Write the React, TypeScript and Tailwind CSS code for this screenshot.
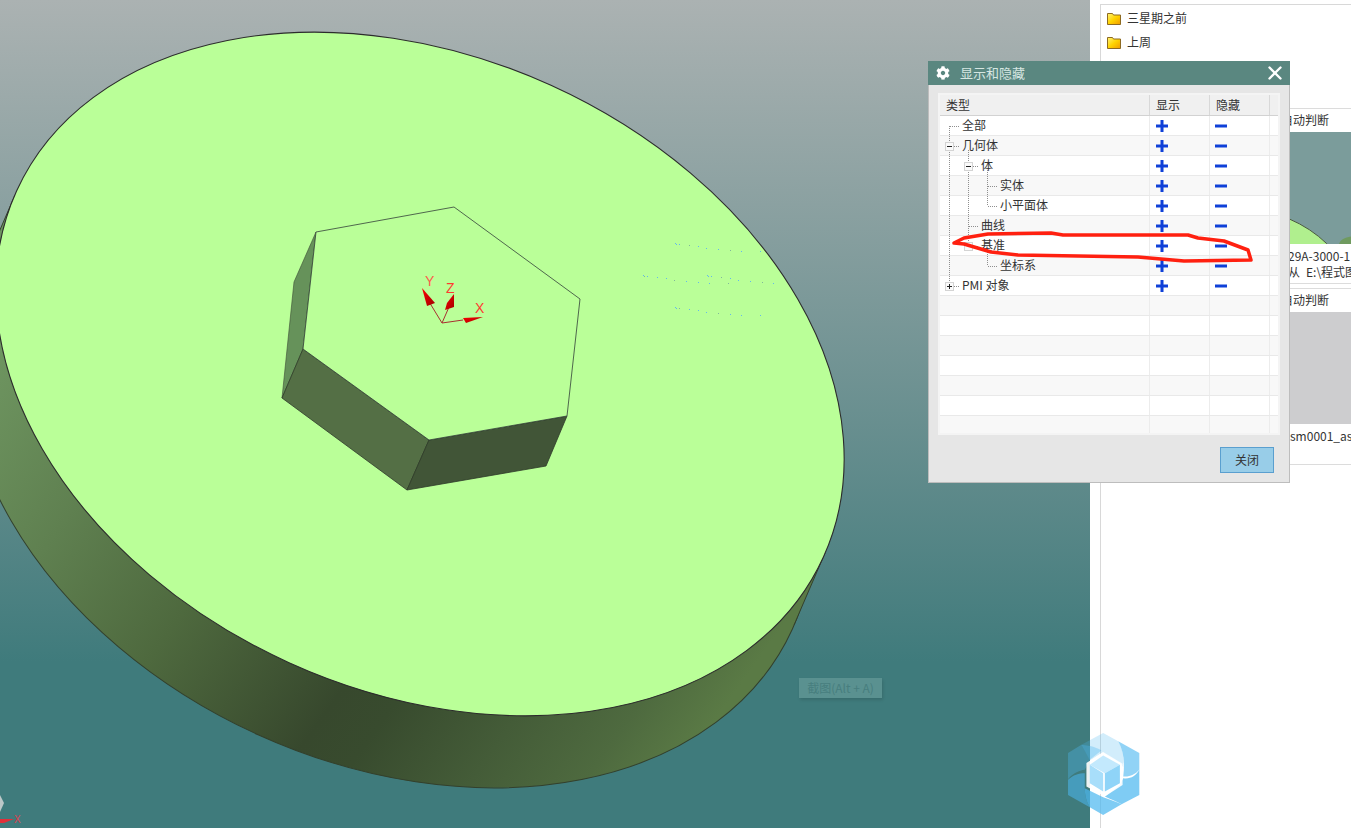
import { FaCog } from "react-icons/fa";
import { X } from "lucide-react";

const topDots = [[135,40],[139,43],[148,43],[178,46],[205,49],[228,55],[265,58],[300,61],[334,64],[391,64]];
const midDots = [[40,136],[43,139],[52,139],[82,142],[109,145],[133,151],[169,154],[205,157],[238,160],[295,160],[232,136],[235,139],[244,139],[274,142],[300,145],[325,151],[361,154],[397,157],[430,160]];
const dots = [...topDots, ...midDots, ...topDots.map(([x, y]) => [x, y + 192])];

function Scene() {
  return (
    <svg width="1090" height="828" viewBox="0 0 1090 828" className="block">
      <defs>
        <linearGradient id="wall" gradientUnits="userSpaceOnUse" x1="0" y1="480" x2="800" y2="640">
          <stop offset="0" stopColor="#6e9560" />
          <stop offset="0.19" stopColor="#5f8050" />
          <stop offset="0.374" stopColor="#4e693e" />
          <stop offset="0.587" stopColor="#37482d" />
          <stop offset="0.65" stopColor="#384b2e" />
          <stop offset="0.78" stopColor="#445c38" />
          <stop offset="0.894" stopColor="#4e6a3f" />
          <stop offset="0.98" stopColor="#5a7a45" />
        </linearGradient>
        <linearGradient id="redcone" x1="0" y1="0" x2="1" y2="1">
          <stop offset="0" stopColor="#ff0000" />
          <stop offset="1" stopColor="#a00000" />
        </linearGradient>
      </defs>
      <ellipse cx="389" cy="446" rx="443" ry="317" transform="rotate(24.4 389 446)" fill="url(#wall)" stroke="#33402c" strokeWidth="1" />
      <polygon points="825,553 794,625 -16,267 15,195" fill="url(#wall)" />
      <path d="M825 553 L794 625 M15 195 L-16 267" stroke="#33402c" strokeWidth="1" />
      <ellipse cx="420" cy="374" rx="443" ry="317" transform="rotate(24.4 420 374)" fill="#baff98" stroke="#2c2c2c" strokeWidth="1.1" />
      <polygon points="316,232 294,282 282,398 303,349" fill="#66925a" stroke="#3c4c36" strokeWidth="0.6" />
      <polygon points="303,349 282,398 407,490 429,440" fill="#546f45" stroke="#2e3a2a" strokeWidth="0.8" />
      <polygon points="429,440 407,490 546,466 567,416" fill="#415537" stroke="#2e3a2a" strokeWidth="0.8" />
      <polygon points="316,232 454,207 580,299 567,416 429,440 303,349" fill="#baff98" stroke="#34403a" strokeWidth="0.8" />
      {dots.map(([x, y], i) => (
        <rect key={i} x={630 + Math.round(x / 3)} y={230 + Math.round(y / 3)} width="1" height="1" fill={i % 4 === 3 ? "#80b89a" : "#62b8ee"} />
      ))}
      <g>
        <path d="M442 323 L428 300 M442 323 L449 307 M442 323 L463 320" stroke="#a83030" strokeWidth="1" fill="none" />
        <polygon points="422,288 435,303 427,306" fill="url(#redcone)" />
        <polygon points="454,294 454,307 445,310 447,303" fill="url(#redcone)" />
        <polygon points="483,317 466,323 463,318" fill="url(#redcone)" />
        <text x="425" y="286" fontSize="14" fill="#ff5a4a" fontFamily="Liberation Sans, sans-serif">Y</text>
        <text x="446" y="293" fontSize="14" fill="#ff3a30" fontFamily="Liberation Sans, sans-serif">Z</text>
        <text x="475" y="313" fontSize="14" fill="#ff3a30" fontFamily="Liberation Sans, sans-serif">X</text>
      </g>
      <polygon points="0,795 4,803 0,812" fill="#bcc8c8" />
      <polygon points="0,819 14,819 4,823 0,823" fill="#e0303a" />
      <text x="14" y="823" fontSize="10" fill="#e04050" fontFamily="Liberation Sans, sans-serif">X</text>
    </svg>
  );
}

function Folder({ id }: { id: string }) {
  return (
    <svg width="14" height="13" viewBox="0 0 14 13" className="block shrink-0">
      <defs>
        <linearGradient id={id} x1="0" y1="0" x2="1" y2="1">
          <stop offset="0" stopColor="#fff27a" />
          <stop offset="0.5" stopColor="#ffd400" />
          <stop offset="1" stopColor="#f09a00" />
        </linearGradient>
      </defs>
      <path d="M0.5 12.5 V1.5 H5.5 L6.5 3 H13.5 V12.5 Z" fill={`url(#${id})`} stroke="#8d6a22" />
    </svg>
  );
}

function Plus() {
  return (
    <svg width="12" height="12" viewBox="0 0 12 12" className="block">
      <path d="M4.5 0h3v4.5H12v3H7.5V12h-3V7.5H0v-3h4.5z" fill="#0f40d8" />
    </svg>
  );
}

function Minus() {
  return (
    <svg width="12" height="4" viewBox="0 0 12 4" className="block">
      <rect x="0" y="0.5" width="12" height="3" fill="#0f40d8" />
    </svg>
  );
}

const rows = [
  { t: "全部", c: "pl-[22px]" },
  { t: "几何体", c: "pl-[22px]" },
  { t: "体", c: "pl-[41px]" },
  { t: "实体", c: "pl-[60px]" },
  { t: "小平面体", c: "pl-[60px]" },
  { t: "曲线", c: "pl-[41px]" },
  { t: "基准", c: "pl-[41px]" },
  { t: "坐标系", c: "pl-[60px]" },
  { t: "PMI 对象", c: "pl-[22px]" },
];

function TreeLines() {
  const ox = 940;
  const oy = 95;
  const box = (x: number, y: number, mark: string, key: string) => (
    <g key={key}>
      <rect x={x - ox + 0.5} y={y - oy + 0.5} width="8" height="8" fill="#fafafa" stroke="#d4d4d4" />
      {mark !== "" && (
        <path
          d={
            mark === "-"
              ? `M${x - ox + 2} ${y - oy + 4.5}h5`
              : `M${x - ox + 2} ${y - oy + 4.5}h5M${x - ox + 4.5} ${y - oy + 2}v5`
          }
          stroke="#222"
        />
      )}
    </g>
  );
  const v = (x: number, y1: number, y2: number, k: string) => (
    <line key={k} x1={x - ox + 0.5} y1={y1 - oy} x2={x - ox + 0.5} y2={y2 - oy} stroke="#8f8f8f" strokeDasharray="1 1" />
  );
  const h = (y: number, x1: number, x2: number, k: string) => (
    <line key={k} x1={x1 - ox} y1={y - oy + 0.5} x2={x2 - ox} y2={y - oy + 0.5} stroke="#8f8f8f" strokeDasharray="1 1" />
  );
  return (
    <svg width="80" height="210" className="absolute left-0 top-0 pointer-events-none">
      {v(949, 126, 286, "a")}
      {h(126, 950, 959, "b")}
      {h(146, 954, 959, "c")}
      {h(286, 954, 959, "d")}
      {v(968, 150, 246, "e")}
      {h(166, 973, 978, "f")}
      {h(226, 969, 978, "g")}
      {h(246, 973, 978, "h")}
      {v(987, 170, 206, "i")}
      {h(186, 988, 997, "j")}
      {h(206, 988, 997, "k")}
      {v(987, 250, 266, "m")}
      {h(266, 988, 997, "n")}
      {box(945, 142, "-", "1")}
      {box(964, 162, "-", "2")}
      {box(964, 242, "", "3")}
      {box(945, 282, "+", "4")}
    </svg>
  );
}

function Dialog() {
  return (
    <div className="absolute left-[928px] top-[61px] w-[362px] h-[422px] bg-[#e6e6e6] border-r border-b border-l border-[#bdbdbd] flex flex-col">
      <div className="h-[24px] -mx-px bg-[#5a8780] flex items-center pl-[8px] pr-[4px] shrink-0">
        <FaCog className="text-white" size={14} />
        <span className="ml-[10px] pb-[2px] text-[13px] leading-none text-[#d6e6e2]">显示和隐藏</span>
        <X className="ml-auto text-white" size={22} strokeWidth={2.6} />
      </div>
      <div className="mx-[9px] mt-[8px] h-[342px] border-2 border-[#f4f4f4] bg-white relative overflow-hidden text-[12px] text-[#333] leading-none shrink-0">
        <div className="flex h-[21px] bg-[#f0f0f0] border-b border-[#d2d2d2]">
          <div className="w-[210px] flex items-center pl-[6px] border-r border-[#d8d8d8]">类型</div>
          <div className="w-[60px] flex items-center pl-[6px] border-r border-[#d8d8d8]">显示</div>
          <div className="w-[60px] flex items-center pl-[6px] border-r border-[#d8d8d8]">隐藏</div>
        </div>
        {Array.from({ length: 16 }).map((_, i) => {
          const r = rows[i];
          return (
            <div key={i} className={`flex h-[20px] border-b border-[#e9e9e9] ${i % 2 === 1 ? "bg-[#f8f8f8]" : "bg-white"}`}>
              <div className={`w-[210px] flex items-center pb-[2px] border-r border-[#ececec] ${r ? r.c : ""}`}>{r ? r.t : ""}</div>
              <div className="w-[60px] flex items-center pl-[6px] border-r border-[#ececec]">{r && <Plus />}</div>
              <div className="w-[60px] flex items-center pl-[5px] border-r border-[#ececec]">{r && <Minus />}</div>
            </div>
          );
        })}
        <TreeLines />
      </div>
      <div className="flex justify-end pr-[15px] pt-[12px]">
        <button className="w-[54px] h-[26px] bg-[#98cde8] border border-[#5a9fcf] text-[12px] text-[#333] leading-none">关闭</button>
      </div>
      <svg width="310" height="40" viewBox="0 0 310 40" className="absolute left-[23px] top-[170px] pointer-events-none">
        <path d="M2 12 L12 7 L36 3 L99 2 L111 4 L236 4 L246 7 L272 10 L296 19 L299 29 L232 30 L186 26 L66 24 L39 21 L12 13 Z" fill="none" stroke="#ff2010" strokeWidth="3.5" strokeLinejoin="round" />
      </svg>
    </div>
  );
}

function SidePanel() {
  return (
    <div className="flex-1 bg-white pl-[10px] pt-[4px] h-[828px]">
      <div className="h-full border-l border-t border-[#d8d8d8] text-[12px] text-[#333] leading-none">
        <div className="h-[103px] pl-[6px] pt-[1px]">
          <div className="h-[24px] flex items-center gap-[6px]"><Folder id="f1" /><span>三星期之前</span></div>
          <div className="h-[24px] flex items-center gap-[6px]"><Folder id="f2" /><span>上周</span></div>
        </div>
        <div className="border-t border-b border-[#dcdcdc] h-[176px] overflow-hidden">
          <div className="h-[23px] pl-[180px] pb-[2px] flex items-center">自动判断</div>
          <svg width="250" height="112" viewBox="0 0 250 112" className="block ml-[9px]">
            <rect width="250" height="112" fill="#7b9c9b" />
            <ellipse cx="120" cy="175" rx="125" ry="100" fill="#b0ef8e" stroke="#4a5a40" />
            <path d="M229 112 C231 106 238 104 250 104 V112 Z" fill="#6f9a5f" />
          </svg>
          <div className="h-[20px] pt-[4px] pl-[187px] flex items-center whitespace-nowrap overflow-hidden">29A-3000-1</div>
          <div className="h-[16px] pl-[187px] flex items-center whitespace-nowrap overflow-hidden">
            <span>从</span>
            <span className="ml-[6px]">E:\程式图</span>
          </div>
        </div>
        <div className="mt-[4px] border-t border-b border-[#dcdcdc] h-[177px] overflow-hidden">
          <div className="h-[23px] pl-[180px] pb-[2px] flex items-center">自动判断</div>
          <div className="h-[112px] ml-[9px] bg-[#cdcdcf]" />
          <div className="h-[20px] pt-[4px] pl-[189px] flex items-center whitespace-nowrap overflow-hidden">sm0001_as</div>
          <div className="h-[20px] pt-[2px] flex items-center justify-end pr-[4px]">,</div>
        </div>
      </div>
    </div>
  );
}

function Watermark() {
  return (
    <svg width="90" height="90" viewBox="85 40 215 245" className="absolute left-[1068px] top-[733px] w-[72px] h-[82px] pointer-events-none">
      <g fill="#4db8f0">
        <path d="M125 75 L190 40 L235 65 C250 90 252 115 250 142 L240 130 L188 98 L150 122 C140 100 130 85 125 75Z" opacity="0.25" />
        <path d="M235 65 L298 100 V150 C285 165 268 172 250 170 C255 130 252 95 235 65Z" opacity="0.62" />
        <path d="M298 150 V225 L245 253 C230 245 212 238 195 230 L240 195 L250 175 C270 178 287 170 298 150Z" opacity="0.72" />
        <path d="M245 253 L190 285 L150 262 C140 245 135 225 135 205 L190 232 C210 240 230 245 245 253Z" opacity="0.72" />
        <path d="M150 262 L85 225 V180 C100 165 118 160 135 160 L135 205 C135 225 140 245 150 262Z" opacity="0.55" />
        <path d="M85 100 L125 75 C155 78 175 85 185 92 L150 120 L135 150 C118 152 100 160 85 178Z" opacity="0.35" />
      </g>
      <polygon points="190,97 248,132 248,195 195,230 140,200 140,130" fill="#ffffff" opacity="0.9" />
      <polygon points="190,107 240,135 195,160 150,135" fill="#c0e8fd" opacity="0.95" />
      <polygon points="195,160 240,135 240,190 195,215" fill="#8fd4f8" />
      <polygon points="150,135 190,160 190,215 150,190" fill="#a8defa" />
    </svg>
  );
}

export default function App() {
  return (
    <div className="relative flex w-[1351px] h-[828px] overflow-hidden font-['Noto_Sans_CJK_SC','Noto_Sans',sans-serif]">
      <div className="w-[1090px] h-[828px] shrink-0 bg-gradient-to-b from-[#abb2b2] to-[#3f7b7c] to-80%">
        <Scene />
      </div>
      <SidePanel />
      <Dialog />
      <div className="absolute left-[799px] top-[678px] w-[83px] h-[20px] bg-[#5a9190] shadow-[1px_2px_3px_rgba(0,0,0,0.12)] flex items-center justify-center text-[12px] leading-none text-[#477e7e]">截图(Alt + A)</div>
      <Watermark />
    </div>
  );
}
